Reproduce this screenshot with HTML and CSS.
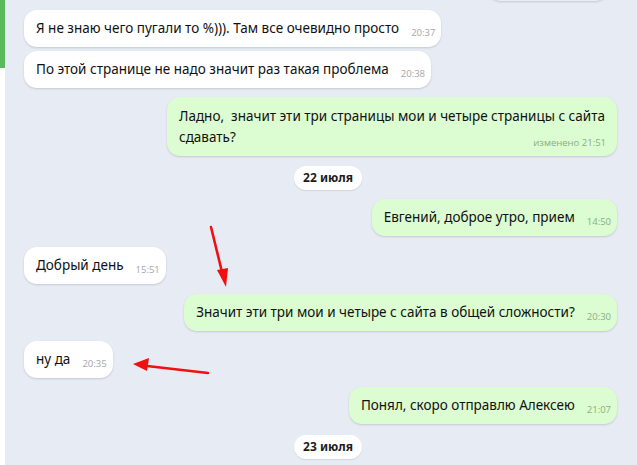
FILE: index.html
```html
<!DOCTYPE html>
<html lang="ru">
<head>
<meta charset="utf-8">
<title>Chat</title>
<link rel="stylesheet" href="styles.css">
</head>
<body>
<div class="app">
  <div class="strip"><div class="strip-top"></div></div>
  <div class="chat">
    <div class="msg out stub"></div>

    <div class="msg in">
      <span class="text">Я не знаю чего пугали то %))). Там все очевидно просто</span><span class="time">20:37</span>
    </div>
    <div class="msg in grouped">
      <span class="text">По этой странице не надо значит раз такая проблема</span><span class="time">20:38</span>
    </div>

    <div class="msg out wide tight">
      <div class="line">Ладно,&nbsp; значит эти три страницы мои и четыре страницы с сайта</div>
      <div class="last-line"><span class="text">сдавать?</span><span class="time">изменено 21:51</span></div>
    </div>

    <div class="date">22 июля</div>

    <div class="msg out tight">
      <span class="text">Евгений, доброе утро, прием</span><span class="time">14:50</span>
    </div>

    <div class="msg in loose">
      <span class="text">Добрый день</span><span class="time">15:51</span>
    </div>

    <div class="msg out">
      <span class="text">Значит эти три мои и четыре с сайта в общей сложности?</span><span class="time">20:30</span>
    </div>

    <div class="msg in">
      <span class="text">ну да</span><span class="time">20:35</span>
    </div>

    <div class="msg out tight">
      <span class="text">Понял, скоро отправлю Алексею</span><span class="time">21:07</span>
    </div>

    <div class="date loose">23 июля</div>
  </div>

  <svg class="arrows" width="637" height="465" viewBox="0 0 637 465">
    <line x1="211" y1="227" x2="222" y2="272" stroke="#f01010" stroke-width="2.6" stroke-linecap="round"/>
    <polygon points="226,287 217,270 228,268" fill="#f01010"/>
    <line x1="208" y1="373" x2="147" y2="366" stroke="#f01010" stroke-width="2.6" stroke-linecap="round"/>
    <polygon points="133,364 149,358 147,371" fill="#f01010"/>
  </svg>
</div>
</body>
</html>
```

FILE: styles.css
```css
html, body {
  margin: 0;
  padding: 0;
}

body {
  width: 637px;
  height: 465px;
  overflow: hidden;
  background: #e7ebf3;
  font-family: "Noto Sans", "Open Sans", sans-serif;
  color: #111;
}

.app {
  position: relative;
  display: flex;
  height: 465px;
}

.strip {
  width: 5px;
  flex: none;
  background: #ffffff;
}

.strip-top {
  height: 68px;
  background: #5cb85c;
}

.chat {
  flex: 1;
  display: flex;
  flex-direction: column;
  align-items: flex-start;
  gap: 10px;
  padding: 0 20px 0 19px;
}

.msg {
  display: flow-root;
  max-width: 432px;
  padding: 8px 6px 9px 12px;
  border-radius: 13px;
  background: #ffffff;
  box-shadow: 0 1px 2px rgba(40, 50, 70, 0.18);
  font-size: 13.5px;
  line-height: 20px;
}

.msg.grouped {
  margin-top: -6px;
}

.tight {
  margin-top: -1px;
}

.loose {
  margin-top: 1px;
}

.msg.out {
  align-self: flex-end;
  background: #dcfcd2;
}

.msg.stub {
  height: 30px;
  width: 120px;
  margin-top: -29px;
  margin-right: 9px;
  margin-bottom: -1px;
  padding: 0;
  background: #e9edf5;
}

.msg.wide {
  width: 432px;
  padding-top: 9px;
  padding-bottom: 8px;
  line-height: 21px;
}

.last-line {
  display: flex;
  align-items: flex-start;
}

.last-line .text {
  flex: 1;
}

.time {
  float: right;
  margin: 9px 0 0 12px;
  font-family: "Open Sans", "Noto Sans", sans-serif;
  font-size: 9.5px;
  line-height: 11px;
  color: #a3a6ab;
}

.last-line .time {
  float: none;
  margin: 10px 5px 0 0;
}

.out .time {
  color: #86b083;
}

.date {
  margin-left: 270px;
  width: 68px;
  height: 24px;
  border-radius: 12px;
  background: #ffffff;
  box-shadow: 0 1px 1px rgba(40, 50, 70, 0.12);
  font-size: 12px;
  font-weight: 700;
  line-height: 24px;
  text-align: center;
  color: #1c1c1c;
}

.arrows {
  position: absolute;
  left: 0;
  top: 0;
  pointer-events: none;
}
```
